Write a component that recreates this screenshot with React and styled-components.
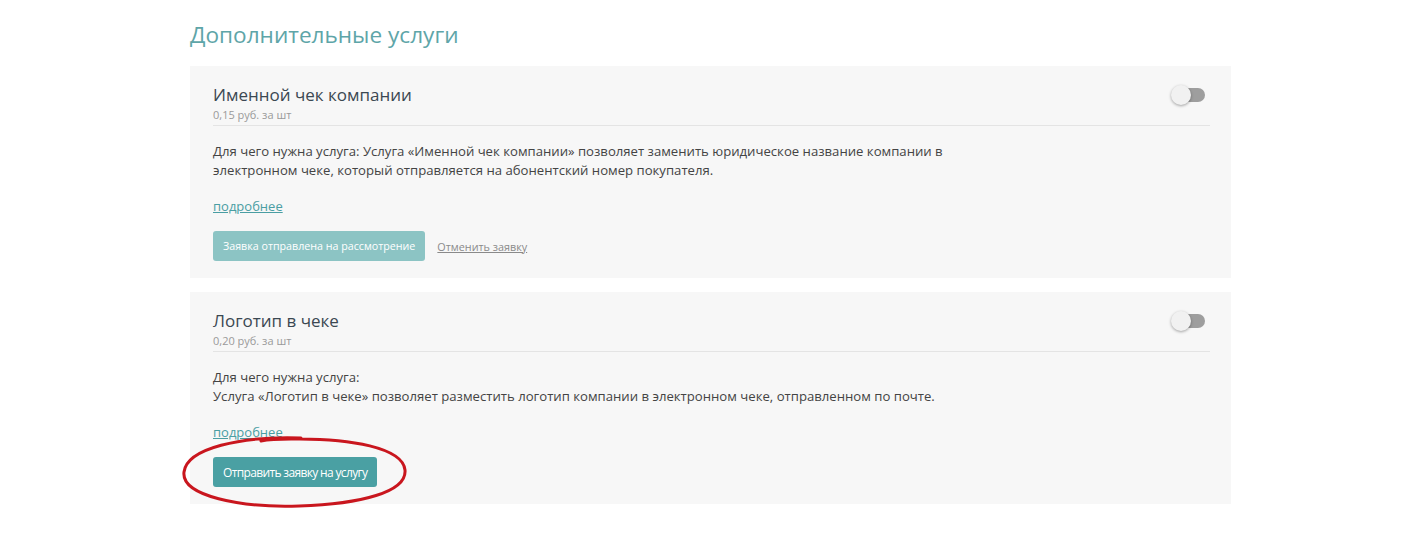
import React from "react";
import styled, { createGlobalStyle } from "styled-components";

const Global = createGlobalStyle`
  html, body { margin: 0; padding: 0; background: #ffffff; }
  body { font-family: "Open Sans", "Noto Sans", sans-serif; }
`;

const Page = styled.div`
  width: 1041px;
  padding: 18px 0 40px 190px;
`;

const Heading = styled.h2`
  margin: 0 0 14px;
  font-weight: 400;
  font-size: 22.6px;
  line-height: 34px;
  color: #5ea5a8;
`;

const List = styled.div`
  display: flex;
  flex-direction: column;
  gap: 14px;
`;

const Card = styled.section`
  position: relative;
  background: #f7f7f7;
  padding: 17px 21px 17px 23px;
`;

const Header = styled.div`
  display: flex;
  align-items: flex-start;
  justify-content: space-between;
  border-bottom: 1px solid #e4e4e4;
  padding-bottom: 3px;
`;

const Title = styled.div`
  font-size: 17px;
  line-height: 24px;
  color: #3b4852;
`;

const Price = styled.div`
  font-size: 11px;
  line-height: 15px;
  color: #9a9a9a;
`;

const Toggle = styled.span`
  position: relative;
  display: inline-block;
  width: 34px;
  height: 20px;
  margin: 2px 5px 0 0;
  &::before {
    content: "";
    position: absolute;
    right: 0;
    top: 3px;
    width: 26px;
    height: 14px;
    border-radius: 7px;
    background: #9e9e9e;
  }
  &::after {
    content: "";
    position: absolute;
    left: 0;
    top: 0;
    width: 20px;
    height: 20px;
    border-radius: 50%;
    background: #f1f1f1;
    box-shadow: 0 1px 3px rgba(0, 0, 0, 0.35);
  }
`;

const Desc = styled.p`
  margin: 16px 0 0;
  font-size: 13.15px;
  line-height: 19px;
  color: #444;
  max-width: 745px;
`;

const More = styled.a`
  display: inline-block;
  margin-top: 17px;
  font-size: 13px;
  line-height: 19px;
  color: #4a9ea3;
  text-decoration: underline;
  cursor: pointer;
`;

const Actions = styled.div`
  display: flex;
  align-items: center;
  gap: 12px;
  margin-top: 15px;
`;

const Button = styled.button`
  height: 30px;
  padding: 0 10px;
  border: none;
  border-radius: 3px;
  font-family: inherit;
  font-size: ${(p) => (p.$sent ? "10.7px" : "12px")};
  font-stretch: ${(p) => (p.$sent ? "100%" : "88%")};
  letter-spacing: ${(p) => (p.$sent ? "0" : "-0.65px")};
  color: #ffffff;
  background: ${(p) => (p.$sent ? "#8cc4c4" : "#4aa0a3")};
  cursor: pointer;
`;

const Cancel = styled.a`
  font-size: 10.8px;
  color: #8a8a8a;
  text-decoration: underline;
  cursor: pointer;
`;

const Mark = styled.svg`
  position: absolute;
  left: -9px;
  top: 142px;
  overflow: visible;
  pointer-events: none;
`;

const services = [
  {
    title: "Именной чек компании",
    price: "0,15 руб. за шт",
    desc: [
      "Для чего нужна услуга: Услуга «Именной чек компании» позволяет заменить юридическое название компании в электронном чеке, который отправляется на абонентский номер покупателя.",
    ],
    sent: true,
  },
  {
    title: "Логотип в чеке",
    price: "0,20 руб. за шт",
    desc: [
      "Для чего нужна услуга:",
      "Услуга «Логотип в чеке» позволяет разместить логотип компании в электронном чеке, отправленном по почте.",
    ],
    sent: false,
    marked: true,
  },
];

export default function App() {
  return (
    <>
      <Global />
      <Page>
        <Heading>Дополнительные услуги</Heading>
        <List>
          {services.map((s) => (
            <Card key={s.title}>
              <Header>
                <div>
                  <Title>{s.title}</Title>
                  <Price>{s.price}</Price>
                </div>
                <Toggle />
              </Header>
              <Desc>
                {s.desc.map((line, i) => (
                  <React.Fragment key={i}>
                    {i > 0 && <br />}
                    {line}
                  </React.Fragment>
                ))}
              </Desc>
              <More>подробнее</More>
              <Actions>
                {s.sent ? (
                  <>
                    <Button $sent>Заявка отправлена на рассмотрение</Button>
                    <Cancel>Отменить заявку</Cancel>
                  </>
                ) : (
                  <Button>Отправить заявку на услугу</Button>
                )}
              </Actions>
              {s.marked && (
                <Mark width="230" height="76" viewBox="0 0 230 76">
                  <path
                    d="M120 4 C 60 2, 6 14, 3 38 C 0 62, 60 74, 118 72 C 180 70, 226 58, 224 36 C 222 14, 170 4, 110 5 C 95 5, 85 6, 80 7"
                    fill="none"
                    stroke="#c9161e"
                    strokeWidth="3"
                    strokeLinecap="round"
                  />
                </Mark>
              )}
            </Card>
          ))}
        </List>
      </Page>
    </>
  );
}
